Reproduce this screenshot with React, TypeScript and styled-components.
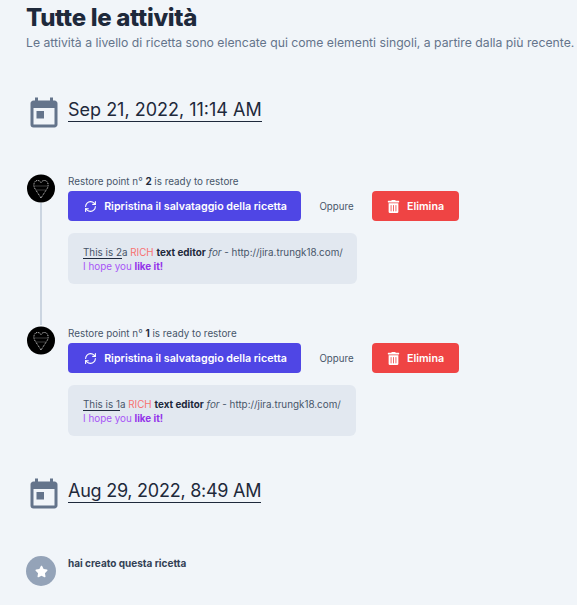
import React from 'react';
import styled, { createGlobalStyle } from 'styled-components';
import { MdToday } from 'react-icons/md';
import { FaStar, FaTrashAlt } from 'react-icons/fa';
import { RefreshCw } from 'lucide-react';

const GlobalStyle = createGlobalStyle`
  html, body {
    margin: 0;
    padding: 0;
    background: #f1f5f9;
    overflow: hidden;
  }
  body {
    font-family: Inter, "Liberation Sans", sans-serif;
    color: #1e293b;
  }
`;

const Page = styled.div`
  width: 577px;
  height: 605px;
  padding: 3px 0 0 26px;
  box-sizing: border-box;
  overflow: hidden;
`;

const Title = styled.h1`
  margin: 0;
  font-size: 24px;
  line-height: 30px;
  font-weight: 800;
  letter-spacing: -0.3px;
  color: #1e293b;
`;

const Subtitle = styled.p`
  margin: 2px 0 0;
  font-size: 12.22px;
  line-height: 16px;
  white-space: nowrap;
  color: #64748b;
`;

const DateRow = styled.div<{ $top: number }>`
  display: flex;
  align-items: flex-start;
  gap: 6px;
  margin-top: ${(p) => p.$top}px;
`;

const DateIcon = styled(MdToday)`
  width: 36px;
  height: 36px;
  color: #64748b;
  flex: none;
`;

const DateText = styled.div<{ $tracking: number }>`
  font-size: 18px;
  line-height: 23px;
  margin-top: 2px;
  letter-spacing: ${(p) => p.$tracking}px;
  border-bottom: 1px solid #1e293b;
  color: #1e293b;
  white-space: nowrap;
`;

const Timeline = styled.div<{ $top: number }>`
  margin-top: ${(p) => p.$top}px;
`;

const Item = styled.div`
  display: flex;
  gap: 12px;
  height: 152px;
`;

const Rail = styled.div`
  width: 30px;
  flex: none;
  display: flex;
  flex-direction: column;
  align-items: center;
  padding-top: 1px;
`;

const RailLine = styled.div`
  width: 2px;
  flex: 1;
  background: #cbd5e1;
`;

const Avatar = styled.svg`
  width: 28px;
  height: 29px;
  flex: none;
`;

const ItemBody = styled.div`
  display: flex;
  flex-direction: column;
  align-items: flex-start;
  padding-top: 1px;
`;

const Caption = styled.div`
  font-size: 9.85px;
  line-height: 14px;
  height: 14px;
  color: #475569;
  b {
    color: #1e293b;
    font-weight: 700;
  }
`;

const Actions = styled.div`
  display: flex;
  align-items: center;
  margin-top: 3px;
`;

const Button = styled.button<{ $bg: string; $width: number; $inset: number }>`
  display: flex;
  align-items: center;
  justify-content: center;
  gap: 7px;
  width: ${(p) => p.$width}px;
  height: 30px;
  padding: 0 0 0 ${(p) => p.$inset}px;
  border: none;
  border-radius: 4px;
  background: ${(p) => p.$bg};
  color: #fff;
  font-family: inherit;
  font-size: 10.7px;
  font-weight: 600;
`;

const Or = styled.span`
  width: 71px;
  text-align: center;
  font-size: 9.7px;
  color: #475569;
`;

const Note = styled.div<{ $width: number }>`
  width: ${(p) => p.$width}px;
  height: 51px;
  box-sizing: border-box;
  margin-top: 12px;
  padding: 12px 15px;
  border-radius: 6px;
  background: #e2e8f0;
  font-size: 9.85px;
  line-height: 14px;
  color: #475569;
  white-space: nowrap;
`;

const Underlined = styled.span`
  color: #475569;
  border-bottom: 1px solid #1e293b;
`;

const Rich = styled.span`
  color: #f87171;
`;

const Strong = styled.b`
  color: #1e293b;
  font-weight: 700;
`;

const Purple = styled.div`
  color: #a855f7;
  b {
    color: #9333ea;
    font-weight: 700;
  }
`;

const CreatedRow = styled.div`
  display: flex;
  gap: 12px;
  margin-top: 43px;
`;

const StarBadge = styled.div`
  width: 30px;
  height: 30px;
  border-radius: 50%;
  background: #94a3b8;
  color: #fff;
  display: flex;
  align-items: center;
  justify-content: center;
  font-size: 13px;
`;

const CreatedText = styled.div`
  font-size: 10px;
  line-height: 14px;
  font-weight: 700;
  color: #334155;
`;

// black avatar with a dotted heart
const HeartAvatar = () => (
  <Avatar viewBox="0 0 28 29">
    <circle cx="14" cy="14.5" r="14" fill="#000" />
    <path
      d="M14 24 L7.5 14 C6 10 7.5 6.5 10.5 6.5 C12.3 6.5 13.5 7.5 14 8.5 C14.5 7.5 15.7 6.5 17.5 6.5 C20.5 6.5 22 10 20.5 14 Z"
      fill="none"
      stroke="#fff"
      strokeWidth="0.8"
      strokeDasharray="1 0.8"
    />
    <path d="M8 12h12M9 16h10" stroke="#666" strokeWidth="0.6" />
  </Avatar>
);

const Restore = ({ n, width, last }: { n: number; width: number; last?: boolean }) => (
  <Item>
    <Rail>
      <HeartAvatar />
      {!last && <RailLine />}
    </Rail>
    <ItemBody>
      <Caption>
        Restore point n° <b>{n}</b> is ready to restore
      </Caption>
      <Actions>
        <Button $bg="#4f46e5" $width={233} $inset={2}>
          <RefreshCw size={13} strokeWidth={2} />
          Ripristina il salvataggio della ricetta
        </Button>
        <Or>Oppure</Or>
        <Button $bg="#ef4444" $width={87} $inset={0}>
          <FaTrashAlt size={13} />
          Elimina
        </Button>
      </Actions>
      <Note $width={width}>
        <Underlined>This is {n}</Underlined>a <Rich>RICH</Rich> <Strong>text editor</Strong> <i>for</i> - http://jira.trungk18.com/
        <Purple>
          I hope you <b>like it!</b>
        </Purple>
      </Note>
    </ItemBody>
  </Item>
);

const App = () => (
  <Page>
    <GlobalStyle />
    <Title>Tutte le attività</Title>
    <Subtitle>Le attività a livello di ricetta sono elencate qui come elementi singoli, a partire dalla più recente.</Subtitle>

    <DateRow $top={45}>
      <DateIcon />
      <DateText $tracking={0}>Sep 21, 2022, 11:14 AM</DateText>
    </DateRow>

    <Timeline $top={41}>
      <Restore n={2} width={289} />
      <Restore n={1} width={288} last />
    </Timeline>

    <DateRow $top={0}>
      <DateIcon />
      <DateText $tracking={-0.25}>Aug 29, 2022, 8:49 AM</DateText>
    </DateRow>

    <CreatedRow>
      <StarBadge>
        <FaStar />
      </StarBadge>
      <CreatedText>hai creato questa ricetta</CreatedText>
    </CreatedRow>
  </Page>
);

export default App;
